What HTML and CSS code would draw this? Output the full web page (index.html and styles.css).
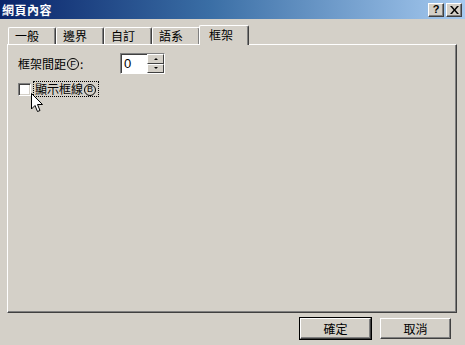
FILE: index.html
```html
<!DOCTYPE html>
<html lang="zh-Hant">
<head>
    <meta charset="UTF-8">
    <title>網頁內容</title>
    <link rel="stylesheet" href="styles.css">
</head>
<body>
    <div class="window">
        <div class="titlebar">
            <span class="title">網頁內容</span>
            <div class="caption-buttons">
                <span class="cap-btn">?</span>
                <span class="cap-btn close">
                    <svg width="9" height="8" viewBox="0 0 9 8"><path d="M0 0h2l2.5 3 2.5-3h2L5.5 4 9 8H7L4.5 5 2 8H0l3.5-4z" fill="#000"/></svg>
                </span>
            </div>
        </div>

        <div class="tabs">
            <div class="tab">一般</div>
            <div class="tab">邊界</div>
            <div class="tab">自訂</div>
            <div class="tab">語系</div>
            <div class="tab active">框架</div>
        </div>

        <div class="panel">
            <div class="row">
                <label class="field-label">框架間距<span class="key">F</span>:</label>
                <div class="spin">
                    <div class="spin-input">0</div>
                    <div class="spin-arrows">
                        <span class="arrow"><i class="up"></i></span>
                        <span class="arrow"><i class="down"></i></span>
                    </div>
                </div>
            </div>
            <div class="row check-row">
                <span class="checkbox"></span>
                <span class="check-label">顯示框線<span class="key">B</span></span>
                <svg class="cursor" width="12" height="20" viewBox="0 0 12 20">
                    <path d="M0.5 0.5v15.5l3.5-3.5 2.5 6 2.5-1-2.5-6h5z" fill="#fff" stroke="#000" stroke-width="1"/>
                </svg>
            </div>
        </div>

        <div class="buttons">
            <button class="btn default">確定</button>
            <button class="btn">取消</button>
        </div>
    </div>
</body>
</html>
```

FILE: styles.css
```css
body {
    margin: 0;
    font-family: "Noto Sans CJK TC", "Noto Sans", sans-serif;
    font-size: 12px;
}
.window {
    width: 465px;
    height: 345px;
    background-color: #d4d0c8;
    position: relative;
    overflow: hidden;
}
.titlebar {
    height: 19px;
    background: linear-gradient(to right, #0a246a 0%, #3a6ea5 45%, #a6caf0 100%);
    display: flex;
    align-items: center;
    justify-content: space-between;
    padding: 0 3px 0 2px;
}
.title {
    color: white;
    font-weight: bold;
    font-size: 12px;
    letter-spacing: 0.5px;
}
.caption-buttons {
    display: flex;
    gap: 2px;
}
.cap-btn {
    width: 16px;
    height: 14px;
    background-color: #d4d0c8;
    border-top: 1px solid #fff;
    border-left: 1px solid #fff;
    border-right: 1px solid #404040;
    border-bottom: 1px solid #404040;
    box-shadow: inset -1px -1px 0 #808080;
    display: flex;
    align-items: center;
    justify-content: center;
    font-family: "Liberation Sans", sans-serif;
    font-weight: bold;
    font-size: 11px;
    line-height: 1;
    color: #000;
    box-sizing: border-box;
}
.tabs {
    display: flex;
    align-items: flex-end;
    padding-left: 8px;
    margin-top: 6px;
    height: 19px;
    position: relative;
    z-index: 1;
}
.tab {
    width: 48px;
    height: 17px;
    box-sizing: border-box;
    border-top: 1px solid #fff;
    border-left: 1px solid #fff;
    border-right: 1px solid #404040;
    box-shadow: inset -1px 0 0 #808080;
    border-radius: 2px 2px 0 0;
    padding-left: 6px;
    line-height: 16px;
    font-size: 12px;
    color: #000;
}
.tab.active {
    width: 50px;
    height: 20px;
    margin-left: -1px;
    margin-bottom: -1px;
    background-color: #d4d0c8;
    padding-left: 9px;
    line-height: 17px;
}
.panel {
    margin: 0 8px 0 7px;
    height: 269px;
    box-sizing: border-box;
    border-top: 1px solid #fff;
    border-left: 1px solid #fff;
    border-right: 1px solid #404040;
    border-bottom: 1px solid #404040;
    box-shadow: inset -1px -1px 0 #808080;
    padding: 8px 10px;
}
.row {
    display: flex;
    align-items: center;
}
.field-label {
    width: 102px;
    font-size: 12px;
    display: flex;
    align-items: center;
}
.key {
    display: flex;
    align-items: center;
    justify-content: center;
    width: 12px;
    height: 12px;
    box-sizing: border-box;
    border: 1px solid #000;
    border-radius: 50%;
    font-family: "Liberation Sans", sans-serif;
    font-size: 9px;
    line-height: 1;
    margin: 1px 1px 0 1px;
}
.spin {
    display: flex;
    width: 45px;
    height: 21px;
    box-sizing: border-box;
    border-top: 1px solid #808080;
    border-left: 1px solid #808080;
    border-right: 1px solid #fff;
    border-bottom: 1px solid #fff;
    box-shadow: inset 1px 1px 0 #404040;
    background-color: #fff;
}
.spin-input {
    flex: 1;
    padding-left: 3px;
    font-family: "Liberation Sans", sans-serif;
    font-size: 13px;
    line-height: 19px;
}
.spin-arrows {
    width: 17px;
    display: flex;
    flex-direction: column;
}
.arrow {
    flex: 1;
    background-color: #d4d0c8;
    box-sizing: border-box;
    border-top: 1px solid #fff;
    border-left: 1px solid #fff;
    border-right: 1px solid #404040;
    border-bottom: 1px solid #404040;
    display: flex;
    align-items: center;
    justify-content: center;
}
.arrow i {
    width: 0;
    height: 0;
    border-left: 2px solid transparent;
    border-right: 2px solid transparent;
}
.arrow .up {
    border-bottom: 2px solid #000;
}
.arrow .down {
    border-top: 2px solid #000;
}
.check-row {
    margin-top: 8px;
    position: relative;
}
.checkbox {
    width: 13px;
    height: 13px;
    box-sizing: border-box;
    border-top: 1px solid #808080;
    border-left: 1px solid #808080;
    border-right: 1px solid #fff;
    border-bottom: 1px solid #fff;
    box-shadow: inset 1px 1px 0 #404040, inset -1px -1px 0 #d4d0c8;
    background-color: #fff;
}
.check-label {
    display: flex;
    align-items: center;
    margin-left: 3px;
    padding: 0 1px;
    outline: 1px dotted #000;
    font-size: 12px;
    line-height: 14px;
}
.cursor {
    position: absolute;
    left: 13px;
    top: 11px;
}
.buttons {
    display: flex;
    justify-content: flex-end;
    gap: 9px;
    padding: 5px 14px 0 0;
}
.btn {
    width: 71px;
    height: 21px;
    background-color: #d4d0c8;
    border-top: 1px solid #fff;
    border-left: 1px solid #fff;
    border-right: 1px solid #404040;
    border-bottom: 1px solid #404040;
    box-shadow: inset -1px -1px 0 #808080;
    font-family: "Noto Sans CJK TC", sans-serif;
    font-size: 12px;
    padding: 0;
}
.btn.default {
    outline: 1px solid #000;
}
```
